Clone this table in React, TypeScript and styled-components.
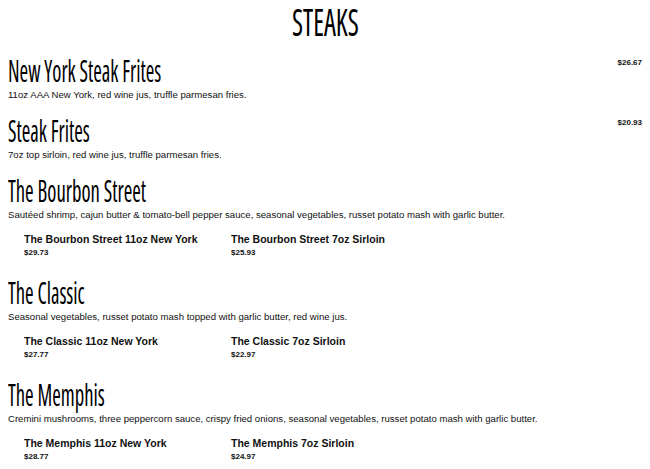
import React, { FC } from 'react';
import styled, { createGlobalStyle } from 'styled-components';

const GlobalStyle = createGlobalStyle`
  body {
    margin: 0;
    background: #fff;
    color: #000;
    font-family: 'Liberation Sans', Arial, sans-serif;
  }
`;

const Page = styled.div`
  padding: 0 8px;
`;

const Title = styled.h1`
  margin: 0;
  height: 42px;
  font-family: 'Open Sans', sans-serif;
  font-stretch: 75%;
  font-weight: 500;
  font-size: 39px;
  line-height: 42px;
  text-align: center;
  span {
    display: inline-block;
    transform: scaleX(0.69);
    transform-origin: center;
  }
`;

const List = styled.div`
  display: flex;
  flex-direction: column;
  margin-top: 12px;
`;

const Item = styled.div<{ $hasVariants: boolean }>`
  display: flex;
  justify-content: space-between;
  align-items: flex-start;
  margin-bottom: ${(p) => (p.$hasVariants ? '18px' : '12px')};
`;

const Info = styled.div`
  display: flex;
  flex-direction: column;
`;

const Name = styled.h2`
  margin: 0;
  height: 34px;
  font-family: 'Open Sans', sans-serif;
  font-stretch: 75%;
  font-weight: 500;
  font-size: 30px;
  line-height: 34px;
  span {
    display: inline-block;
    white-space: nowrap;
    transform: scaleX(0.69);
    transform-origin: left center;
  }
`;

const Desc = styled.p`
  margin: 0;
  font-size: 9.6px;
  line-height: 14px;
  color: #111;
`;

const Price = styled.div<{ $top?: number }>`
  margin-top: ${(p) => p.$top ?? 0}px;
  font-size: 8px;
  line-height: 10px;
  font-weight: 700;
  color: #111;
  white-space: nowrap;
`;

const Variants = styled.div`
  display: grid;
  grid-template-columns: 207px 207px;
  padding-left: 16px;
  margin-top: 10px;
`;

const Variant = styled.div`
  display: flex;
  flex-direction: column;
  gap: 2px;
`;

const VariantName = styled.div`
  font-size: 10.5px;
  line-height: 14px;
  font-weight: 700;
  color: #111;
`;

interface IVariant {
  name: string;
  price: string;
}

interface IItem {
  name: string;
  desc: string;
  price?: string;
  variants?: IVariant[];
}

const items: IItem[] = [
  {
    name: 'New York Steak Frites',
    desc: '11oz AAA New York, red wine jus, truffle parmesan fries.',
    price: '$26.67',
  },
  {
    name: 'Steak Frites',
    desc: '7oz top sirloin, red wine jus, truffle parmesan fries.',
    price: '$20.93',
  },
  {
    name: 'The Bourbon Street',
    desc: 'Sautéed shrimp, cajun butter & tomato-bell pepper sauce, seasonal vegetables, russet potato mash with garlic butter.',
    variants: [
      { name: 'The Bourbon Street 11oz New York', price: '$29.73' },
      { name: 'The Bourbon Street 7oz Sirloin', price: '$25.93' },
    ],
  },
  {
    name: 'The Classic',
    desc: 'Seasonal vegetables, russet potato mash topped with garlic butter, red wine jus.',
    variants: [
      { name: 'The Classic 11oz New York', price: '$27.77' },
      { name: 'The Classic 7oz Sirloin', price: '$22.97' },
    ],
  },
  {
    name: 'The Memphis',
    desc: 'Cremini mushrooms, three peppercorn sauce, crispy fried onions, seasonal vegetables, russet potato mash with garlic butter.',
    variants: [
      { name: 'The Memphis 11oz New York', price: '$28.77' },
      { name: 'The Memphis 7oz Sirloin', price: '$24.97' },
    ],
  },
];

const App: FC = () => {
  return (
    <Page>
      <GlobalStyle />
      <Title>
        <span>STEAKS</span>
      </Title>
      <List>
        {items.map((item) => (
          <Item key={item.name} $hasVariants={!!item.variants}>
            <Info>
              <Name>
                <span>{item.name}</span>
              </Name>
              <Desc>{item.desc}</Desc>
              {item.variants && (
                <Variants>
                  {item.variants.map((v) => (
                    <Variant key={v.name}>
                      <VariantName>{v.name}</VariantName>
                      <Price>{v.price}</Price>
                    </Variant>
                  ))}
                </Variants>
              )}
            </Info>
            {item.price && <Price $top={4}>{item.price}</Price>}
          </Item>
        ))}
      </List>
    </Page>
  );
};

export default App;
